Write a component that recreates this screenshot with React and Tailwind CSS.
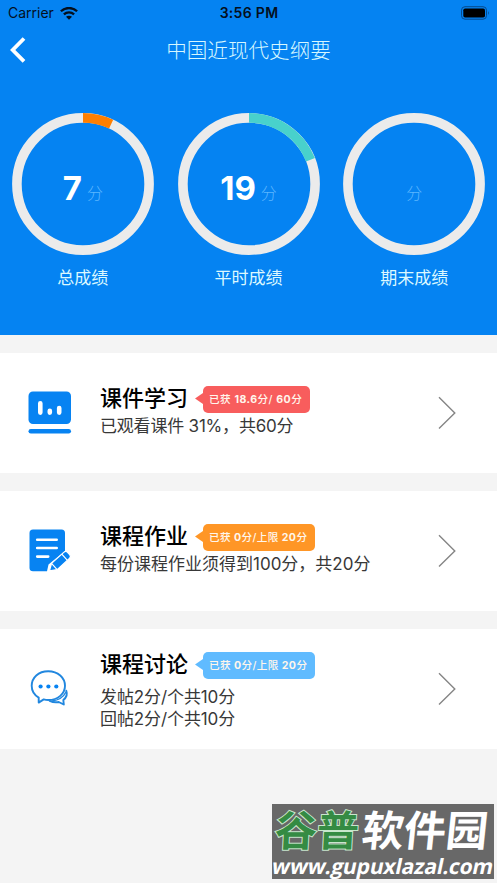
import React from "react";

function Ring({ value, color, label }) {
  const circumference = 2 * Math.PI * 66.1;
  return (
    <div className="flex flex-1 flex-col items-center">
      <div className="grid h-[142px] w-[142px] place-items-center">
        <svg viewBox="0 0 142 142" className="col-start-1 row-start-1 h-[142px] w-[142px] -rotate-90" fill="none">
          <circle cx="71" cy="71" r="66.1" stroke="#ebebeb" strokeWidth="9.6" />
          {value ? (
            <circle
              cx="71" cy="71" r="66.1" stroke={color} strokeWidth="9.6"
              strokeDasharray={`${(circumference * value) / 100} ${circumference}`}
            />
          ) : null}
        </svg>
        <div className="col-start-1 row-start-1 flex items-center justify-center gap-[5px] pt-[9px]">
          {value ? <span className="text-[33px] leading-[40px] font-bold text-white">{value}</span> : null}
          <span className="pt-[10px] text-[16px] leading-[30px] font-light text-[#5cb6ff]">分</span>
        </div>
      </div>
      <div className="mt-[11px] text-[17px] leading-[24px] text-[#dcf8ff]">{label}</div>
    </div>
  );
}

function Badge({ color, children, className }) {
  return (
    <div className="flex items-center" style={{ color }}>
      <svg viewBox="0 0 8 12" className="h-[12px] w-[8px]" fill="currentColor">
        <path d="M0 5.5 8 0v11z" />
      </svg>
      <div className={`flex h-[27px] items-center rounded-[5px] bg-current pl-[6px] pt-[2px] ${className}`}>
        <span className="whitespace-pre text-[10.600px] font-medium text-[#fff6ec]">{children}</span>
      </div>
    </div>
  );
}

function CoursewareIcon() {
  return (
    <svg viewBox="0 0 44 44" className="h-[44px] w-[44px]">
      <rect x="0.5" y="0.5" width="42.5" height="32.5" rx="4.5" fill="#0783f2" />
      <rect x="0.5" y="38" width="42.5" height="4.6" rx="2.3" fill="#0783f2" />
      <g stroke="#fff" strokeWidth="4.6" strokeLinecap="round">
        <path d="M12.3 12.200v9.400M21.800 19.800v1.800M31.200 17v4.600" />
      </g>
    </svg>
  );
}

function HomeworkIcon() {
  return (
    <svg viewBox="0 0 44 44" className="h-[44px] w-[44px]">
      <path d="M5 .5h28.500A3.500 3.500 0 0 1 37 4v18L20.500 35.500l-1.500 6.800H5A3.500 3.500 0 0 1 1.500 39V4A3.500 3.500 0 0 1 5 .5Z" fill="#0783f2" />
      <path d="M9.200 10.800h19.500M9.200 19h19.500M9.200 27.600h11" stroke="#fff" strokeWidth="2.600" strokeLinecap="round" />
      <g transform="translate(23 40.500) rotate(-42)" fill="#0783f2" stroke="#fff" strokeWidth="1.200" strokeLinejoin="round">
        <path d="M-2 0 4.500-4.200H21q2.800 0 2.800 2.800v2.800q0 2.800-2.800 2.800H4.500Z" />
        <path d="M4.500-4.200v8.400M18.300-4.200v8.400" />
      </g>
    </svg>
  );
}

function DiscussionIcon() {
  return (
    <svg viewBox="0 0 44 44" className="h-[44px] w-[44px]" fill="none" stroke="#2187df" strokeWidth="1.900" strokeLinejoin="round" strokeLinecap="round">
      <path d="M20.200 4.200C10.400 4.200 3.700 10.600 3.700 18.800c0 5 2.500 9.200 7 11.800v5l5-3.200c1.500.4 3 .6 4.500.6C30 33 37 26.800 37 18.800S30 4.200 20.200 4.200Z" />
      <path d="M38.300 23.700c1.200 3.300.3 6.700-3 9.200l.5 4.600-5.100-2.500c-3 .500-6.500 0-9-1.200" />
      <path d="M24 34c6.500-.8 11.500-4 14-9" strokeWidth="1.400" />
      <g fill="#0783f2" stroke="none">
        <circle cx="12.600" cy="19.500" r="2.100" />
        <circle cx="20.400" cy="19.500" r="2.100" />
        <circle cx="28.300" cy="19.500" r="2.100" />
      </g>
    </svg>
  );
}

function Card({ icon, title, badge, badgeColor, badgeClass, lines, className, linesClass }) {
  return (
    <section className="flex h-[120px] bg-white pl-[28px] pr-[41px]">
      <div className="flex h-full w-[72px] shrink-0 items-center">{icon}</div>
      <div className={`flex-1 ${className}`}>
        <div className="flex h-[30px] items-center gap-[7px]">
          <h2 className="w-[88px] whitespace-nowrap pb-[2px] text-[22px] leading-[30px] font-medium text-black">{title}</h2>
          <Badge color={badgeColor} className={badgeClass}>{badge}</Badge>
        </div>
        <div className={`whitespace-nowrap text-[17px] leading-[22px] text-[#383838] ${linesClass}`}>
          {lines.map((line) => <p key={line}>{line}</p>)}
        </div>
      </div>
      <svg viewBox="0 0 18 34" className="h-[34px] w-[18px] self-center" fill="none" stroke="#858585" strokeWidth="1.400">
        <path d="M1 1.300 16.800 17 1 32.600" />
      </svg>
    </section>
  );
}

export default function App() {
  return (
    <main className="h-[883px] w-[497px] overflow-hidden bg-[#f4f4f4] font-['Inter','Noto_Sans_CJK_SC',sans-serif]">
      <header className="h-[335px] bg-[#0583f2]">
        <div className="grid h-[26px] grid-cols-3 items-center pl-[8px] pr-[7px] text-[#04101e]">
          <div className="flex items-center gap-[6px]">
            <span className="text-[14px] leading-[20px]">Carrier</span>
            <svg viewBox="0 0 18 13" className="h-[13px] w-[18px]" fill="none" stroke="currentColor" strokeWidth="2.300">
              <path d="M.9 4.300C5.400-.1 12.600-.1 17.100 4.300M3.900 7.300c2.900-2.700 7.300-2.700 10.200 0" />
              <path d="M6 9.800c1.700-1.500 4.300-1.500 6 0l-3 3z" fill="currentColor" stroke="none" />
            </svg>
          </div>
          <div className="text-center text-[14px] leading-[20px] font-semibold tracking-[0.300px]">3:56 PM</div>
          <svg viewBox="0 0 30 14" className="h-[14px] w-[30px] justify-self-end">
            <rect x="1.500" y=".7" width="25" height="12.500" rx="3.500" fill="none" stroke="#064a8d" />
            <rect x="3.300" y="2.500" width="21.700" height="9" rx="1.800" fill="#000" />
            <path d="M28 5v4q1.800-2 0-4Z" fill="#064a8d" />
          </svg>
        </div>
        <div className="grid h-[48px] grid-cols-[40px_1fr_40px] items-center">
          <svg viewBox="0 0 16 26" className="ml-[10px] h-[26px] w-[16px]" fill="none" stroke="#fff" strokeWidth="3.800">
            <path d="M14 1.500 2.700 13 14 24.400" />
          </svg>
          <h1 className="pt-[2px] text-center text-[20.600px] leading-[30px] font-light text-[#d6f7ff]">中国近现代史纲要</h1>
        </div>
        <div className="flex pt-[38.500px]">
          <Ring value={7} color="#ff7f00" label="总成绩" />
          <Ring value={19} color="#48d1cc" label="平时成绩" />
          <Ring value={0} color="#48d1cc" label="期末成绩" />
        </div>
      </header>
      <div className="flex flex-col gap-[18px] pt-[18px]">
        <Card icon={<CoursewareIcon />} title="课件学习" badge={<>已获 <b className="font-bold">18.6</b>分/ <b className="font-bold">60</b>分</>} badgeColor="#f85d5d" badgeClass="w-[107px] tracking-[0.450px]" lines={["已观看课件 31%，共60分"]} className="pt-[31px]" linesClass="mt-[1px] tracking-[-0.200px]" />
        <Card icon={<HomeworkIcon />} title="课程作业" badge={<>已获 <b className="font-bold">0</b>分/上限 <b className="font-bold">20</b>分</>} badgeColor="#ff9626" badgeClass="w-[112px] tracking-[0.350px]" lines={["每份课程作业须得到100分，共20分"]} className="pt-[31px]" linesClass="mt-[1px]" />
        <Card icon={<DiscussionIcon />} title="课程讨论" badge={<>已获 <b className="font-bold">0</b>分/上限 <b className="font-bold">20</b>分</>} badgeColor="#60bbff" badgeClass="w-[112px] tracking-[0.350px]" lines={["发帖2分/个共10分", "回帖2分/个共10分"]} className="pt-[21px]" linesClass="mt-[6px] tracking-[-0.100px]" />
      </div>
      <aside className="ml-[272px] mt-[55px] h-[75px] w-[222px] bg-[#686868] text-white">
        <div className="flex h-[50px] items-center pl-[3px] pt-[4px] text-[42px] leading-[50px] font-bold">
          <span className="-skew-x-3 text-[#348b43] [-webkit-text-stroke:2px_#c9e7cd] [paint-order:stroke_fill]">谷普</span>
          <span className="ml-[3px] -skew-x-6">软件园</span>
        </div>
        <div className="-skew-x-12 whitespace-nowrap text-center font-['Open_Sans',sans-serif] text-[21px] leading-[24px] font-bold tracking-[-0.150px]">www.gupuxlazal.com</div>
      </aside>
    </main>
  );
}
